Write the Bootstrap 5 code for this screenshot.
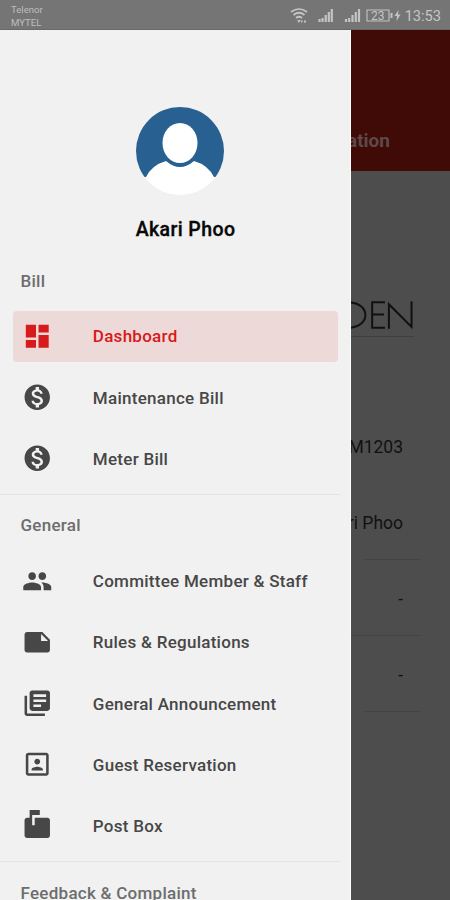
<!DOCTYPE html>
<html lang="en">
<head>
<meta charset="utf-8">
<meta name="viewport" content="width=device-width, initial-scale=1">
<title>Dashboard menu</title>
<link href="https://cdn.jsdelivr.net/npm/bootstrap@5.3.0/dist/css/bootstrap.min.css" rel="stylesheet">
<style>
  body { font-family: Roboto, "Liberation Sans", sans-serif; height: 900px; background: #4d4d4d; }
  .status-bar { height: 30px; background: #757575; color: #c6c6c6; border-bottom: 1px solid #696969; padding: 0 9px 0 11px; }
  .carriers { font-size: 9.6px; line-height: 13px; padding-top: 3px; color: #bdbdbd; }
  .status-icons { padding-top: 2px; }
  .clock { font-size: 14.6px; line-height: 20px; }
  .drawer { width: 351px; background: #f1f1f1; border-right: 1px solid #fff; }
  .profile { height: 223.6px; padding-top: 77px; }
  .avatar { margin-left: 9px; }
  .profile-name { font-size: 19.5px; font-weight: 500; line-height: 24px; letter-spacing: .4px; color: #080808; margin: 23px 0 0 21px; -webkit-text-stroke: .35px; }
  .section-title { height: 60.5px; padding: 2px 0 0 20.5px; font-size: 17px; letter-spacing: .27px; font-weight: 500; color: #6d6d6d; }
  .section-title.first { height: 57px; padding-top: 0; padding-bottom: 1px; }
  .menu-list { padding: 0 12px 10px 13px; gap: 10.2px; }
  .menu-item { height: 51px; padding-left: 10px; border-radius: 4px; font-size: 17px; font-weight: 500; color: #474747; text-decoration: none; letter-spacing: .27px; }
  .menu-item svg { width: 30.5px; height: 30.5px; margin: 0 40px 0 -.7px; fill: currentColor; flex: none; }
  .menu-item span { padding-top: 2px; }
  .menu-item.selected { background: #eed9d9; color: #d71a1a; }
  .section-rule { height: 1px; background: #e4e4e4; margin-right: 10px; }
  .page-head { height: 141px; background: #400a07; color: #5c4a48; padding-top: 97px; font-size: 19px; font-weight: 700; padding-right: 60px; }
  .page-body { color: #111; }
  .brand { height: 138px; margin: 28px 36px 70px 0; padding-bottom: 1px; border-bottom: 1px solid #404040; }
  .field { height: 76px; padding: 4px 47px 0 0; font-size: 17.5px; }
  .field-rule { height: 1px; margin: 0 29px -1px 13px; background: #434343; }
  .field-rule.wide { margin-left: 0; }
</style>
</head>
<body class="d-flex flex-column overflow-hidden">
<header class="status-bar d-flex justify-content-between flex-shrink-0">
  <div class="carriers"><div>Telenor</div><div>MYTEL</div></div>
  <div class="status-icons d-flex align-items-center">
    <svg width="111" height="18" viewBox="0 0 111 18" fill="none" stroke="#c4c4c4">
      <path d="M1 5Q9 -1 17 5M3.500 8Q9 3.500 14.500 8M6 11Q9 8.500 12 11" stroke-width="1.700"/>
      <path d="M7 13h4l-2 2z" fill="#c4c4c4" stroke="none"/>
      <path d="M8 14.500h1.500M11 14.500h1.500M14 14.500h2" stroke-width="1.800"/>
      <path d="M29.500 12v3M32.500 11v4M35.700 8v7M38.800 5v10M41.800 2v13M56 12v3M59.200 11v4M62.500 8v7M65.800 5v10M69 2v13" stroke-width="2.200"/>
      <path d="M77 3h22v11h-22z" stroke-width="1.100"/>
      <path d="M101.500 6v5" stroke-width="2"/>
      <path d="M108.500 3l-4 6h2.500l-.5 5 4-6.500h-2.500z" fill="#c4c4c4" stroke="none"/>
      <text x="81" y="13" fill="#c4c4c4" stroke="none" font-family="Roboto, sans-serif" font-size="12">23</text>
    </svg>
    <span class="clock ms-1">13:53</span>
  </div>
</header>
<div class="d-flex flex-grow-1 overflow-hidden">
  <nav class="drawer flex-shrink-0 overflow-hidden">
    <div class="profile d-flex flex-column align-items-center">
      <svg class="avatar flex-shrink-0" width="88" height="88" viewBox="0 0 88 88">
        <defs><clipPath id="disc"><circle cx="44" cy="44" r="44"/></clipPath></defs>
        <g clip-path="url(#disc)">
          <path d="M0 0H88V70H0z" fill="#286092"/>
          <path d="M0 90V70H10Q16 58 30 54Q44 66 58 54Q72 58 78 70H88V90z" fill="#fff"/>
          <ellipse cx="44" cy="36" rx="17.500" ry="20" fill="#fff"/>
        </g>
      </svg>
      <div class="profile-name">Akari Phoo</div>
    </div>
    <div class="section-title first d-flex align-items-center">Bill</div>
    <div class="menu-list d-flex flex-column">
      <a href="#" class="menu-item selected d-flex align-items-center"><svg viewBox="0 0 24 24"><path d="M3 13h8V3H3v10zm0 8h8v-6H3v6zm10 0h8V11h-8v10zm0-18v6h8V3h-8z"/></svg><span>Dashboard</span></a>
      <a href="#" class="menu-item d-flex align-items-center"><svg viewBox="0 0 24 24"><path id="coin" d="M12 2C6.480 2 2 6.480 2 12s4.480 10 10 10 10-4.480 10-10S17.520 2 12 2zm1.410 16.090V20h-2.670v-1.930c-1.710-.36-3.160-1.460-3.270-3.400h1.960c.1 1.050.82 1.870 2.650 1.870 1.960 0 2.400-.98 2.400-1.590 0-.83-.44-1.610-2.670-2.140-2.480-.6-4.180-1.620-4.180-3.670 0-1.720 1.390-2.840 3.110-3.210V4h2.670v1.950c1.860.45 2.790 1.860 2.850 3.390H14.300c-.05-1.110-.64-1.870-2.220-1.870-1.500 0-2.400.68-2.400 1.640 0 .84.65 1.390 2.670 1.910s4.180 1.390 4.180 3.910c-.01 1.830-1.380 2.830-3.120 3.160z"/></svg><span>Maintenance Bill</span></a>
      <a href="#" class="menu-item d-flex align-items-center"><svg viewBox="0 0 24 24"><use href="#coin"/></svg><span>Meter Bill</span></a>
    </div>
    <div class="section-rule"></div>
    <div class="section-title d-flex align-items-center">General</div>
    <div class="menu-list d-flex flex-column">
      <a href="#" class="menu-item d-flex align-items-center"><svg viewBox="0 0 24 24"><path d="M16 11c1.660 0 2.990-1.340 2.990-3S17.660 5 16 5s-3 1.340-3 3 1.340 3 3 3zm-8 0c1.660 0 2.990-1.340 2.990-3S9.660 5 8 5 5 6.340 5 8s1.340 3 3 3zm0 2c-2.330 0-7 1.170-7 3.500V19h14v-2.500C15 14.170 10.330 13 8 13zm8 0c-.29 0-.62.02-.97.05C16.190 13.890 17 15.020 17 16.500V19h6v-2.500c0-2.330-4.670-3.500-7-3.500z"/></svg><span>Committee Member &amp; Staff</span></a>
      <a href="#" class="menu-item d-flex align-items-center"><svg viewBox="0 0 24 24"><path d="M22 10l-6-6H4c-1.100 0-2 .9-2 2v12c0 1.100.9 2 2 2h16c1.100 0 2-.9 2-2v-8zm-7-4.500l5.500 5.500H15V5.500z"/></svg><span>Rules &amp; Regulations</span></a>
      <a href="#" class="menu-item d-flex align-items-center"><svg viewBox="0 0 24 24"><path d="M4 6H2v14c0 1.100.9 2 2 2h14v-2H4V6zm16-4H8c-1.100 0-2 .9-2 2v12c0 1.100.9 2 2 2h12c1.100 0 2-.9 2-2V4c0-1.100-.9-2-2-2zm-1 9H9V9h10v2zm-4 4H9v-2h6v2zm4-8H9V5h10v2z"/></svg><span>General Announcement</span></a>
      <a href="#" class="menu-item d-flex align-items-center"><svg viewBox="0 0 24 24"><path d="M12 12.250c1.240 0 2.250-1.010 2.250-2.250S13.240 7.750 12 7.750 9.750 8.760 9.750 10s1.010 2.250 2.250 2.250zm4.500 4c0-1.500-3-2.250-4.500-2.250s-4.500.75-4.500 2.250V17h9v-.75zM19 3H5c-1.100 0-2 .9-2 2v14c0 1.100.9 2 2 2h14c1.100 0 2-.9 2-2V5c0-1.100-.9-2-2-2zm0 16H5V5h14v14z"/></svg><span>Guest Reservation</span></a>
      <a href="#" class="menu-item d-flex align-items-center"><svg viewBox="0 0 24 24"><path d="M20 6H10v6H8V4h6V0H6v6H4c-1.100 0-2 .9-2 2v12c0 1.100.9 2 2 2h16c1.100 0 2-.9 2-2V8c0-1.100-.9-2-2-2z"/></svg><span>Post Box</span></a>
    </div>
    <div class="section-rule"></div>
    <div class="section-title d-flex align-items-center">Feedback &amp; Complaint</div>
  </nav>
  <main class="flex-grow-1 overflow-hidden">
    <div class="page-head d-flex justify-content-end text-nowrap">Information</div>
    <div class="page-body">
      <div class="brand d-flex align-items-end justify-content-end">
        <svg width="64" height="34" viewBox="0 0 64 34" fill="none" stroke="#101010" stroke-width="2"><path d="M-10 1H-3C20.500 1 20.500 27 -3 27H-10"/><path d="M34.500 1H21.500V27H34.500M21.500 13.500H33.500M38.500 28V3L61.500 26V0"/></svg>
      </div>
      <div class="field d-flex align-items-center justify-content-end text-nowrap">M1203</div>
      <div class="field d-flex align-items-center justify-content-end text-nowrap">Akari Phoo</div>
      <div class="field-rule"></div>
      <div class="field d-flex align-items-center justify-content-end">-</div>
      <div class="field-rule wide"></div>
      <div class="field d-flex align-items-center justify-content-end">-</div>
      <div class="field-rule"></div>
    </div>
  </main>
</div>
<script src="https://cdn.jsdelivr.net/npm/bootstrap@5.3.0/dist/js/bootstrap.bundle.min.js"></script>
</body>
</html>
